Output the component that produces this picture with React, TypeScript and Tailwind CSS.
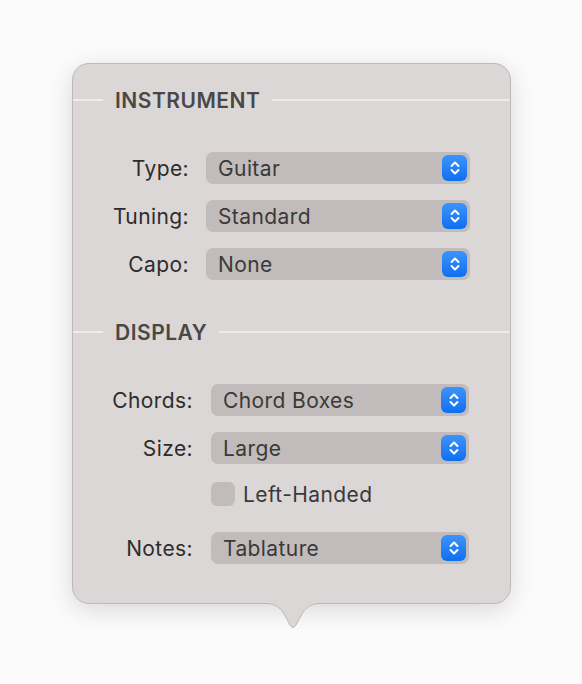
import React from "react";

function Stepper() {
  return (
    <div className="w-[25px] h-[26px] rounded-[6px] bg-gradient-to-b from-[#3d93fb] to-[#0a6ff0] flex items-center justify-center">
      <svg width="12" height="16" viewBox="0 0 12 16" fill="none">
        <path d="M2.5 6 L6 2.5 L9.5 6" stroke="white" strokeWidth="2" strokeLinecap="round" strokeLinejoin="round" />
        <path d="M2.5 10 L6 13.5 L9.5 10" stroke="white" strokeWidth="2" strokeLinecap="round" strokeLinejoin="round" />
      </svg>
    </div>
  );
}

function Select({ value, width }: { value: string; width: string }) {
  return (
    <div className={`${width} h-[32px] rounded-[7px] bg-[#c1bcbb] flex items-center justify-between pl-[12px] pr-[3px]`}>
      <span className="text-[21px] leading-none tracking-[0.4px] text-[#3b3938]">{value}</span>
      <Stepper />
    </div>
  );
}

function SectionHeader({ title }: { title: string }) {
  return (
    <div className="flex items-center h-[24px]">
      <div className="w-[30px] h-[2px] bg-[#eeebea]" />
      <span className="mx-[12px] text-[21px] leading-none font-semibold tracking-[0.5px] text-[#4a4847]">{title}</span>
      <div className="flex-1 h-[2px] bg-[#eeebea]" />
    </div>
  );
}

function Row({ label, value, labelW, selectW }: { label: string; value: string; labelW: string; selectW: string }) {
  return (
    <div className="flex items-center h-[32px]">
      <div className={`${labelW} text-right text-[21px] leading-none tracking-[0.4px] text-[#2e2c2b]`}>{label}</div>
      <Select value={value} width={selectW} />
    </div>
  );
}

export default function App() {
  return (
    <div className="w-[582px] h-[684px] bg-[#fbfbfb] pt-[63px] pl-[72px]" style={{ fontFamily: "Inter, 'Noto Sans', sans-serif" }}>
      <div className="relative w-[439px] h-[541px] rounded-[17px] bg-[#dbd7d6] border border-[#bdb9b8] shadow-[0_6px_24px_rgba(0,0,0,0.14)] pt-[24px]">
        <SectionHeader title="INSTRUMENT" />
        <div className="flex flex-col gap-[16px] mt-[40px]">
          <Row label="Type:" value="Guitar" labelW="w-[133px] pr-[17px]" selectW="w-[264px]" />
          <Row label="Tuning:" value="Standard" labelW="w-[133px] pr-[17px]" selectW="w-[264px]" />
          <Row label="Capo:" value="None" labelW="w-[133px] pr-[17px]" selectW="w-[264px]" />
        </div>
        <div className="mt-[40px]">
          <SectionHeader title="DISPLAY" />
        </div>
        <div className="flex flex-col mt-[40px]">
          <Row label="Chords:" value="Chord Boxes" labelW="w-[138px] pr-[18px]" selectW="w-[258px]" />
          <div className="mt-[16px]">
            <Row label="Size:" value="Large" labelW="w-[138px] pr-[18px]" selectW="w-[258px]" />
          </div>
          <div className="flex items-center h-[24px] mt-[18px] pl-[138px]">
            <div className="w-[24px] h-[24px] rounded-[6px] bg-[#c1bcbb]" />
            <span className="ml-[8px] text-[21px] leading-none tracking-[0.4px] text-[#3b3938]">Left-Handed</span>
          </div>
          <div className="mt-[26px]">
            <Row label="Notes:" value="Tablature" labelW="w-[138px] pr-[18px]" selectW="w-[258px]" />
          </div>
        </div>
        <svg className="absolute left-[191px] top-[539px]" width="58" height="30" viewBox="0 0 58 30">
          <path d="M0 0 C9 0 13 2 19 9 L26 22 Q29 27 32 22 L39 9 C45 2 49 0 58 0 Z" fill="#dbd7d6" />
          <path d="M0 0.5 C9 0.5 13 2 19 9 L26 22 Q29 27 32 22 L39 9 C45 2 49 0.5 58 0.5" fill="none" stroke="#bdb9b8" strokeWidth="1" />
        </svg>
      </div>
    </div>
  );
}
